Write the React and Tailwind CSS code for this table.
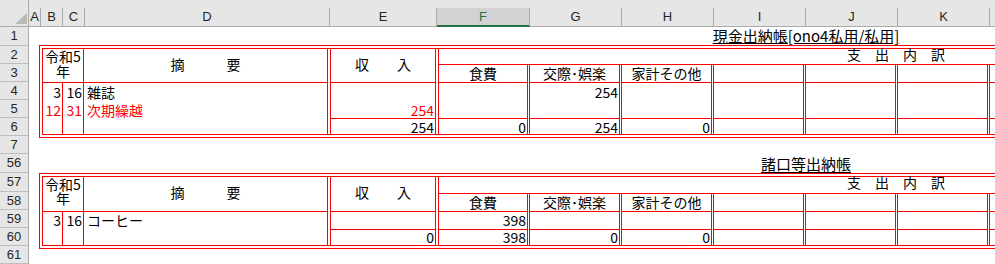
const JP = "font-['Noto_Sans_CJK_JP',sans-serif]"
const UI = "font-['Liberation_Sans','Noto_Sans_CJK_JP',sans-serif]"
const RED = 'border-[#ff0000]'

const colHeads = [
  { k: 'A', w: 'w-[12px]' },
  { k: 'B', w: 'w-[22px]' },
  { k: 'C', w: 'w-[22px]' },
  { k: 'D', w: 'w-[245px]' },
  { k: 'E', w: 'w-[107px]' },
  { k: 'F', w: 'w-[93px]', sel: true },
  { k: 'G', w: 'w-[92px]' },
  { k: 'H', w: 'w-[92px]' },
  { k: 'I', w: 'w-[92px]' },
  { k: 'J', w: 'w-[92px]' },
  { k: 'K', w: 'w-[92px]' },
  { k: 'L', w: 'w-[92px]' },
]

const rowHeads = [
  { n: '1', h: 'h-[19px]' },
  { n: '2', h: 'h-[18px]' },
  { n: '3', h: 'h-[18px]' },
  { n: '4', h: 'h-[18px]' },
  { n: '5', h: 'h-[18px]' },
  { n: '6', h: 'h-[18px]' },
  { n: '7', h: 'h-[18px]' },
  { n: '56', h: 'h-[19px]' },
  { n: '57', h: 'h-[19px]' },
  { n: '58', h: 'h-[18px]' },
  { n: '59', h: 'h-[18px]' },
  { n: '60', h: 'h-[18px]' },
  { n: '61', h: 'h-[18px]' },
]

// 現金出納帳
const cash = {
  headH: 'h-[34px]',
  stripH: 'h-[16px]',
  nameLead: 'h-[15px] leading-[15px]',
  bodyLead: 'h-[18px] leading-[18px]',
  body: [
    { b: '3', c: '16', d: '雑誌' },
    { b: '12', c: '31', d: '次期繰越', red: true },
  ],
  rows: [
    { h: 'h-[36px]', border: true, line: 'h-[18px] leading-[18px]' },
    { h: 'h-[15px]', line: 'h-[17px] leading-[17px]' },
  ],
  income: [[null, { v: '254', red: true }], ['254']],
  money: [
    { w: 'w-[91px]', label: '食費', cells: [[], ['0']] },
    { w: 'w-[92px]', label: '交際･娯楽', cells: [['254'], ['254']] },
    { w: 'w-[92px]', label: '家計その他', cells: [[], ['0']] },
    { w: 'w-[92px]', cells: [[], []] },
    { w: 'w-[92px]', cells: [[], []] },
    { w: 'w-[92px]', cells: [[], []] },
    { w: 'w-[92px]', cells: [[], []] },
  ],
}

// 諸口等出納帳
const misc = {
  headH: 'h-[35px]',
  stripH: 'h-[17px]',
  nameLead: 'h-[14px] leading-[14px]',
  bodyLead: 'h-[17px] leading-[17px]',
  body: [{ b: '3', c: '16', d: 'コーヒー' }],
  rows: [
    { h: 'h-[18px]', border: true, line: 'h-[17px] leading-[17px]' },
    { h: 'h-[15px]', line: 'h-[15px] leading-[15px]' },
  ],
  income: [[], ['0']],
  money: [
    { w: 'w-[91px]', label: '食費', cells: [['398'], ['398']] },
    { w: 'w-[92px]', label: '交際･娯楽', cells: [[], ['0']] },
    { w: 'w-[92px]', label: '家計その他', cells: [[], ['0']] },
    { w: 'w-[92px]', cells: [[], []] },
    { w: 'w-[92px]', cells: [[], []] },
    { w: 'w-[92px]', cells: [[], []] },
    { w: 'w-[92px]', cells: [[], []] },
  ],
}

function ColumnHeader() {
  return (
    <div className={`flex h-[27px] items-end bg-[#e6e6e6] ${UI}`}>
      <div className="relative h-[27px] w-[29px] shrink-0 border-r border-b border-[#ababab]">
        <svg className="absolute right-[1px] bottom-[2px]" width="12" height="11" viewBox="0 0 12 11">
          <polygon points="12,0 12,11 0,11" fill="#b9b9b9" />
        </svg>
      </div>
      {colHeads.map((c) => (
        <div
          key={c.k}
          className={`${c.w} shrink-0 h-[19px] flex items-center justify-center border-r border-[#ababab] text-[13px] ${
            c.sel ? 'bg-[#d2d2d2] text-[#217346] border-b-2 border-b-[#217346]' : 'border-b text-[#262626]'
          }`}
        >
          {c.k}
        </div>
      ))}
    </div>
  )
}

function RowHeader() {
  return (
    <div className={`w-[29px] shrink-0 bg-[#e6e6e6] border-r border-[#ababab] ${UI}`}>
      {rowHeads.map((r) => (
        <div
          key={r.n}
          className={`${r.h} border-b border-[#bdbdbd] flex items-center justify-center text-[13px] text-[#262626]`}
        >
          {r.n}
        </div>
      ))}
    </div>
  )
}

function Value({ item, line }) {
  if (!item) return <div className={line} />
  const v = typeof item === 'string' ? item : item.v
  const red = typeof item === 'object' && item.red
  return (
    <div className={`${line} text-right pr-[1px] whitespace-nowrap ${red ? 'text-[#ff0000]' : ''}`}>{v}</div>
  )
}

function MoneyCells({ rows, cells }) {
  return rows.map((r, i) => (
    <div key={i} className={`${r.h} ${r.border ? `border-b ${RED}` : ''}`}>
      {(cells[i] || []).map((item, j) => (
        <Value key={j} item={item} line={r.line} />
      ))}
    </div>
  ))
}

function Ledger({ t }) {
  return (
    <div className={`ml-[10px] w-[1100px] flex border-4 border-double ${RED}`}>
      {/* 令和5年 / 月日 */}
      <div className="w-[41px] shrink-0 flex flex-col">
        <div className={`${t.headH} border-b border-r ${RED} flex flex-col items-center`}>
          <div className={t.nameLead}>令和5</div>
          <div className={t.nameLead}>年</div>
        </div>
        <div className="flex-1 flex">
          <div className={`w-[20px] border-r ${RED}`}>
            {t.body.map((l, i) => (
              <div key={i} className={`${t.bodyLead} text-right pr-[1px] ${l.red ? 'text-[#ff0000]' : ''}`}>
                {l.b}
              </div>
            ))}
          </div>
          <div className={`w-[21px] border-r ${RED}`}>
            {t.body.map((l, i) => (
              <div key={i} className={`${t.bodyLead} text-right pr-[1px] ${l.red ? 'text-[#ff0000]' : ''}`}>
                {l.c}
              </div>
            ))}
          </div>
        </div>
      </div>

      {/* 摘要 */}
      <div className={`w-[247px] shrink-0 flex flex-col border-r-4 border-double ${RED}`}>
        <div className={`${t.headH} border-b ${RED} flex items-center justify-center pb-[3px] leading-[17px] whitespace-pre`}>
          摘　　　要
        </div>
        <div className="flex-1 pl-[3px]">
          {t.body.map((l, i) => (
            <div key={i} className={`${t.bodyLead} whitespace-nowrap ${l.red ? 'text-[#ff0000]' : ''}`}>
              {l.d}
            </div>
          ))}
        </div>
      </div>

      {/* 収入 */}
      <div className={`w-[108px] shrink-0 flex flex-col border-r-4 border-double ${RED}`}>
        <div className={`${t.headH} border-b ${RED} flex items-center justify-center pb-[3px] leading-[17px] whitespace-pre`}>
          収　　入
        </div>
        <MoneyCells rows={t.rows} cells={t.income} />
      </div>

      {/* 支出内訳 */}
      <div className="flex-1 flex flex-col">
        <div className={`${t.stripH} border-b ${RED} pl-[408px] whitespace-pre`}>
          <div className="leading-[14px] -mt-[2px]">支　出　内　訳</div>
        </div>
        <div className="flex-1 flex">
          {t.money.map((col, i) => (
            <div key={i} className={`${col.w} shrink-0 flex flex-col border-r-[3px] border-double ${RED}`}>
              <div className={`h-[18px] border-b ${RED} text-center leading-[17px] whitespace-nowrap`}>{col.label}</div>
              <MoneyCells rows={t.rows} cells={col.cells} />
            </div>
          ))}
        </div>
      </div>
    </div>
  )
}

export default function App() {
  return (
    <div className="w-[995px] h-[264px] overflow-hidden bg-white">
      <ColumnHeader />
      <div className="flex h-[237px]">
        <RowHeader />
        <div className={`flex-1 overflow-hidden bg-white text-[14px] text-black ${JP}`}>
          <div className="h-[18px]">
            <div className="ml-[675px] w-[204px] text-center text-[15px] leading-[18px] whitespace-nowrap">
              <span className="underline underline-offset-[1px]">現金出納帳[ono4私用/私用]</span>
            </div>
          </div>
          <Ledger t={cash} />
          <div className="h-[35px] pt-[16px]">
            <div className="ml-[675px] w-[204px] text-center text-[15px] leading-[19px] whitespace-nowrap">
              <span className="underline underline-offset-[2px]">諸口等出納帳</span>
            </div>
          </div>
          <Ledger t={misc} />
        </div>
      </div>
    </div>
  )
}
